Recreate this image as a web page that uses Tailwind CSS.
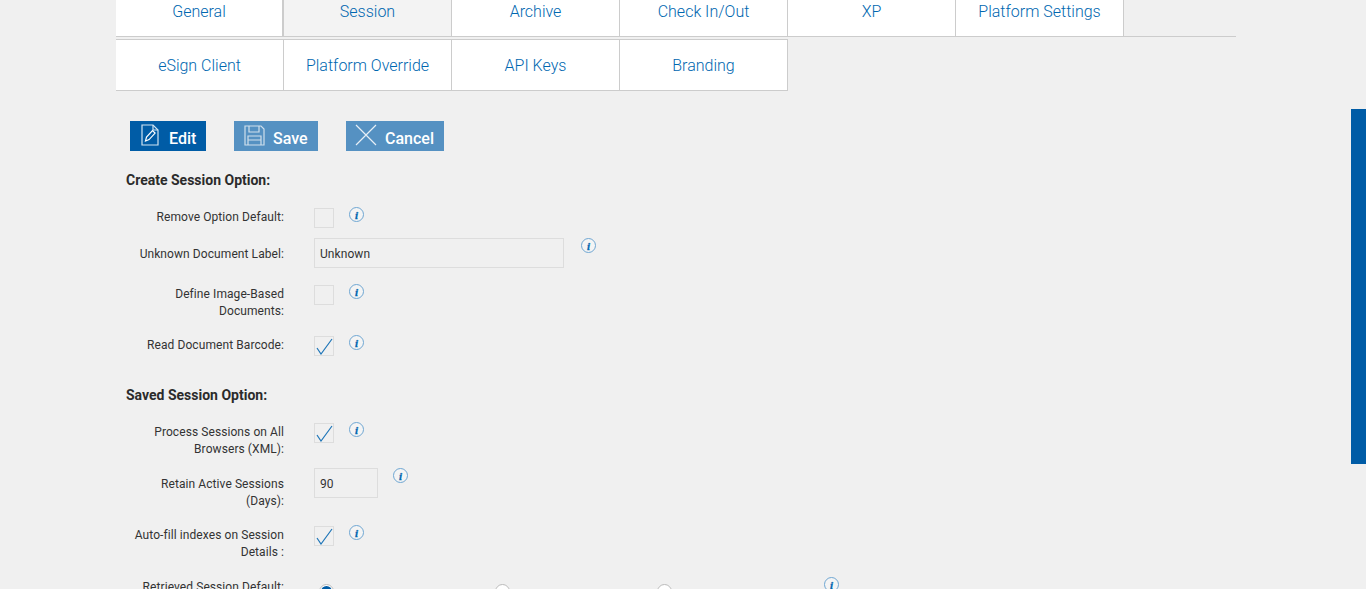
<!DOCTYPE html><html lang="en">
<head>
  <meta charset="UTF-8">
  <title>Session Settings</title>
  <script src="https://cdn.jsdelivr.net/npm/@tailwindcss/browser@4"></script>
</head>
<body class="bg-[#f0f0f0] h-[589px] overflow-hidden relative font-['Roboto',sans-serif]">
<div class="fixed top-[109px] right-0 w-[15px] h-[355px] bg-[#005ca6]"></div>

<div class="ml-[116px] w-[1120px] -mt-[15px]">
  <!-- Tabs -->
  <div class="flex border-b border-[#cccccc] h-[52px] text-[16px] font-light text-[#0067b0]">
    <a class="w-[168px] pt-[2px] bg-white border-r-2 border-[#cccccc] flex items-center justify-center">General</a>
    <a class="w-[168px] pt-[2px] bg-[#f3f3f3] border-r border-[#cccccc] flex items-center justify-center">Session</a>
    <a class="w-[168px] pt-[2px] bg-white border-r border-[#cccccc] flex items-center justify-center">Archive</a>
    <a class="w-[168px] pt-[2px] bg-white border-r border-[#cccccc] flex items-center justify-center">Check In/Out</a>
    <a class="w-[168px] pt-[2px] bg-white border-r border-[#cccccc] flex items-center justify-center">XP</a>
    <a class="w-[168px] pt-[2px] bg-white border-r border-[#cccccc] flex items-center justify-center">Platform Settings</a>
  </div>
  <div class="flex h-[52px] mt-[2px] text-[16px] font-light text-[#0067b0]">
    <a class="w-[168px] pt-[2px] bg-white border-y border-r border-[#cccccc] flex items-center justify-center">eSign Client</a>
    <a class="w-[168px] pt-[2px] bg-white border-y border-r border-[#cccccc] flex items-center justify-center">Platform Override</a>
    <a class="w-[168px] pt-[2px] bg-white border-y border-r border-[#cccccc] flex items-center justify-center">API Keys</a>
    <a class="w-[168px] pt-[2px] bg-white border-y border-r border-[#cccccc] flex items-center justify-center">Branding</a>
  </div>

  <!-- Buttons -->
  <div class="flex mt-[30px] ml-[14px] h-[30px] text-white text-[16px] font-medium">
    <button class="w-[76px] bg-[#005ca6] flex items-center pl-[11px] gap-[10px]">
      <svg class="w-[18px] h-[22px] -mt-[2px]" viewBox="0 0 18 22" fill="none" stroke="#cfe3f2" stroke-width="1.2"><path d="M1 1h11l5 5v15H1z"/><path d="M12 1v5h5"/><path d="M4.5 17l1-4 6-6.5 2.6 2.6-6 6.5z" stroke="#fff"/></svg>
      <span class="mt-[5px]">Edit</span>
    </button>
    <button class="w-[84px] ml-[28px] bg-[#5591c2] flex items-center pl-[10px] gap-[8px]">
      <svg class="w-[21px] h-[21px] -mt-[2px]" viewBox="0 0 21 21" fill="none" stroke="#cfdfec" stroke-width="1.2"><path d="M1 1h16l3 3v16H1z"/><path d="M5 1v6h10V1"/><path d="M4 20v-9h13v9M4 15h13"/></svg>
      <span class="mt-[5px]">Save</span>
    </button>
    <button class="w-[98px] ml-[28px] bg-[#5591c2] flex items-center pl-[9px] gap-[8px]">
      <svg class="w-[22px] h-[22px] -mt-[2px]" viewBox="0 0 22 22" fill="none" stroke="#e6eff6" stroke-width="1.2"><path d="M1 1l20 20M21 1L1 21"/></svg>
      <span class="mt-[5px]">Cancel</span>
    </button>
  </div>

  <!-- Create Session Option -->
  <h3 class="ml-[10px] mt-[21px] text-[14px] leading-[16px] font-bold text-[#2b2b2b]">Create Session Option:</h3>

  <div class="mt-[20px] text-[12px] leading-[17px] tracking-[0.08px] text-[#333333]">
    <div class="flex h-[30px]">
      <label class="ml-[10px] w-[158px] text-right pt-[1px]">Remove Option Default:</label>
      <div class="ml-[30px] w-[20px] h-[20px] border border-[#dddddd] bg-[#f0f0f0]"></div>
      <svg class="ml-[15px] -mt-[1px] w-[15px] h-[15px]" viewBox="0 0 15 15"><circle cx="7.5" cy="7.5" r="7" fill="#fff" fill-opacity=".25" stroke="#6fa6d2"/><text x="7.5" y="11.5" text-anchor="middle" font-family="Liberation Serif" font-weight="700" font-style="italic" font-size="11" fill="#0067b0" stroke="#0067b0" stroke-width=".3">i</text></svg>
    </div>
    <div class="flex h-[47px]">
      <label class="ml-[10px] w-[158px] text-right pt-[8px]">Unknown Document Label:</label>
      <input class="ml-[30px] w-[250px] h-[30px] border border-[#dddddd] bg-[#f0f0f0] px-[5px] pt-[2px] text-[12px] tracking-[0.08px]" value="Unknown" disabled>
      <svg class="ml-[17px] w-[15px] h-[15px]" viewBox="0 0 15 15"><circle cx="7.5" cy="7.5" r="7" fill="#fff" fill-opacity=".25" stroke="#6fa6d2"/><text x="7.5" y="11.5" text-anchor="middle" font-family="Liberation Serif" font-weight="700" font-style="italic" font-size="11" fill="#0067b0" stroke="#0067b0" stroke-width=".3">i</text></svg>
    </div>
    <div class="flex h-[51px]">
      <label class="ml-[10px] w-[158px] text-right pt-[1px]">Define Image-Based Documents:</label>
      <div class="ml-[30px] w-[20px] h-[20px] border border-[#dddddd] bg-[#f0f0f0]"></div>
      <svg class="ml-[15px] -mt-[1px] w-[15px] h-[15px]" viewBox="0 0 15 15"><circle cx="7.5" cy="7.5" r="7" fill="#fff" fill-opacity=".25" stroke="#6fa6d2"/><text x="7.5" y="11.5" text-anchor="middle" font-family="Liberation Serif" font-weight="700" font-style="italic" font-size="11" fill="#0067b0" stroke="#0067b0" stroke-width=".3">i</text></svg>
    </div>
    <div class="flex h-[30px]">
      <label class="ml-[10px] w-[158px] text-right pt-[1px]">Read Document Barcode:</label>
      <div class="ml-[30px] w-[20px] h-[20px] border border-[#dddddd] bg-[#f0f0f0]">
        <svg class="w-[18px] h-[18px]" viewBox="0 0 18 18" fill="none" stroke="#1f76b8" stroke-width="1.2"><path d="M2 11l4 6L17 2"/></svg>
      </div>
      <svg class="ml-[15px] -mt-[1px] w-[15px] h-[15px]" viewBox="0 0 15 15"><circle cx="7.5" cy="7.5" r="7" fill="#fff" fill-opacity=".25" stroke="#6fa6d2"/><text x="7.5" y="11.5" text-anchor="middle" font-family="Liberation Serif" font-weight="700" font-style="italic" font-size="11" fill="#0067b0" stroke="#0067b0" stroke-width=".3">i</text></svg>
    </div>
  </div>

  <!-- Saved Session Option -->
  <h3 class="ml-[10px] mt-[21px] text-[14px] leading-[16px] font-bold text-[#2b2b2b]">Saved Session Option:</h3>

  <div class="mt-[20px] text-[12px] leading-[17px] tracking-[0.08px] text-[#333333]">
    <div class="flex h-[45px]">
      <label class="ml-[10px] w-[158px] text-right pt-[1px]">Process Sessions on All Browsers (XML):</label>
      <div class="ml-[30px] w-[20px] h-[20px] border border-[#dddddd] bg-[#f0f0f0]">
        <svg class="w-[18px] h-[18px]" viewBox="0 0 18 18" fill="none" stroke="#1f76b8" stroke-width="1.2"><path d="M2 11l4 6L17 2"/></svg>
      </div>
      <svg class="ml-[15px] -mt-[1px] w-[15px] h-[15px]" viewBox="0 0 15 15"><circle cx="7.5" cy="7.5" r="7" fill="#fff" fill-opacity=".25" stroke="#6fa6d2"/><text x="7.5" y="11.5" text-anchor="middle" font-family="Liberation Serif" font-weight="700" font-style="italic" font-size="11" fill="#0067b0" stroke="#0067b0" stroke-width=".3">i</text></svg>
    </div>
    <div class="flex h-[58px]">
      <label class="ml-[10px] w-[158px] text-right pt-[8px]">Retain Active Sessions (Days):</label>
      <input class="ml-[30px] w-[64px] h-[30px] border border-[#dddddd] bg-[#f0f0f0] px-[5px] pt-[2px] text-[12px] tracking-[0.08px]" value="90" disabled>
      <svg class="ml-[15px] w-[15px] h-[15px]" viewBox="0 0 15 15"><circle cx="7.5" cy="7.5" r="7" fill="#fff" fill-opacity=".25" stroke="#6fa6d2"/><text x="7.5" y="11.5" text-anchor="middle" font-family="Liberation Serif" font-weight="700" font-style="italic" font-size="11" fill="#0067b0" stroke="#0067b0" stroke-width=".3">i</text></svg>
    </div>
    <div class="flex h-[52px]">
      <label class="ml-[10px] w-[158px] text-right pt-[1px]">Auto-fill indexes on Session Details :</label>
      <div class="ml-[30px] w-[20px] h-[20px] border border-[#dddddd] bg-[#f0f0f0]">
        <svg class="w-[18px] h-[18px]" viewBox="0 0 18 18" fill="none" stroke="#1f76b8" stroke-width="1.2"><path d="M2 11l4 6L17 2"/></svg>
      </div>
      <svg class="ml-[15px] -mt-[1px] w-[15px] h-[15px]" viewBox="0 0 15 15"><circle cx="7.5" cy="7.5" r="7" fill="#fff" fill-opacity=".25" stroke="#6fa6d2"/><text x="7.5" y="11.5" text-anchor="middle" font-family="Liberation Serif" font-weight="700" font-style="italic" font-size="11" fill="#0067b0" stroke="#0067b0" stroke-width=".3">i</text></svg>
    </div>
    <div class="flex h-[30px]">
      <label class="ml-[10px] w-[158px] text-right pt-[1px]">Retrieved Session Default:</label>
      <div class="ml-[35px] mt-[6px] w-[15px] h-[15px] rounded-full border border-[#bbbbbb] bg-white flex items-center justify-center"><div class="w-[11px] h-[11px] rounded-full bg-[#005ca6]"></div></div>
      <div class="ml-[161px] mt-[6px] w-[15px] h-[15px] rounded-full border border-[#bbbbbb] bg-white"></div>
      <div class="ml-[147px] mt-[6px] w-[15px] h-[15px] rounded-full border border-[#bbbbbb] bg-white"></div>
      <svg class="ml-[152px] -mt-[1px] w-[15px] h-[15px]" viewBox="0 0 15 15"><circle cx="7.5" cy="7.5" r="7" fill="#fff" fill-opacity=".25" stroke="#6fa6d2"/><text x="7.5" y="11.5" text-anchor="middle" font-family="Liberation Serif" font-weight="700" font-style="italic" font-size="11" fill="#0067b0" stroke="#0067b0" stroke-width=".3">i</text></svg>
    </div>
  </div>
</div>
</body>
</html>
